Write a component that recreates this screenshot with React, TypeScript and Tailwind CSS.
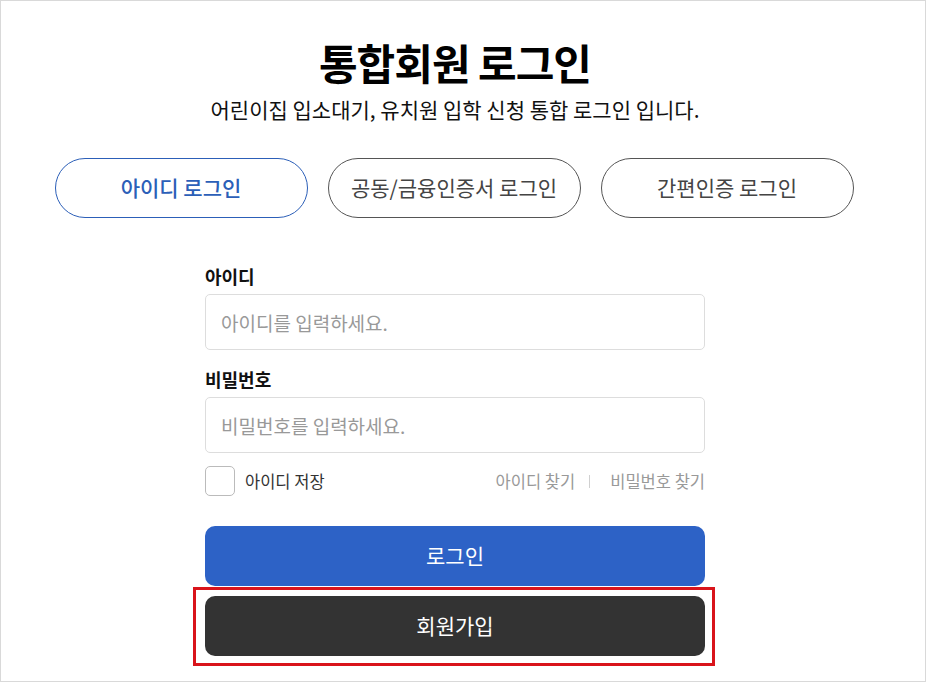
import React from "react";

const font = {
  fontFamily: '"Noto Sans CJK KR", "Noto Sans", sans-serif',
};

export default function App() {
  return (
    <div
      className="w-[926px] h-[682px] border border-[#d9d9d9] bg-white overflow-hidden"
      style={font}
    >
      <div className="w-[908px] flex flex-col items-center">
        <h1 className="mt-[33px] text-[42px] leading-[56px] font-bold text-black tracking-[-1px]">
          통합회원 로그인
        </h1>
        <p className="mt-[5px] text-[21px] leading-[28px] text-[#111]">
          어린이집 입소대기, 유치원 입학 신청 통합 로그인 입니다.
        </p>

        <div className="mt-[35px] mr-[2px] flex gap-[20px]">
          <button className="w-[253px] h-[60px] rounded-full border border-[#2c5fb8] text-[#2c5fb8] text-[21px] font-medium">
            아이디 로그인
          </button>
          <button className="w-[253px] h-[60px] rounded-full border border-[#555] text-[#444] text-[21px]">
            공동/금융인증서 로그인
          </button>
          <button className="w-[253px] h-[60px] rounded-full border border-[#555] text-[#444] text-[21px]">
            간편인증 로그인
          </button>
        </div>

        <form className="w-[500px] mt-[46px] flex flex-col">
          <label className="text-[18px] leading-[24px] font-bold text-[#111]">아이디</label>
          <input
            className="mt-[6px] h-[56px] rounded-[5px] border border-[#dddddd] px-[15px] text-[19px] placeholder:text-[#999] outline-none"
            placeholder="아이디를 입력하세요."
          />
          <label className="mt-[17px] text-[18px] leading-[24px] font-bold text-[#111]">비밀번호</label>
          <input
            type="password"
            className="mt-[6px] h-[56px] rounded-[5px] border border-[#dddddd] px-[15px] text-[19px] placeholder:text-[#999] outline-none"
            placeholder="비밀번호를 입력하세요."
          />

          <div className="mt-[13px] flex items-center justify-between">
            <div className="flex items-center gap-[10px]">
              <span className="w-[30px] h-[30px] rounded-[5px] border border-[#bbbbbb] bg-white" />
              <span className="text-[16.5px] text-[#333]">아이디 저장</span>
            </div>
            <div className="flex items-center text-[16.5px] text-[#999]">
              <span>아이디 찾기</span>
              <span className="ml-[14px] mr-[20px] w-px h-[13px] bg-[#d0d0d0]" />
              <span>비밀번호 찾기</span>
            </div>
          </div>

          <button
            type="button"
            className="mt-[30px] h-[60px] rounded-[10px] bg-[#2d62c6] text-white text-[21px]"
          >
            로그인
          </button>
          <div className="relative mt-[10px]">
            <button
              type="button"
              className="w-full h-[60px] rounded-[10px] bg-[#333333] text-white text-[21px]"
            >
              회원가입
            </button>
            <div className="absolute -top-[9px] -bottom-[10px] -left-[12px] -right-[10px] border-[3px] border-[#d9141b] pointer-events-none" />
          </div>
        </form>
      </div>
    </div>
  );
}
